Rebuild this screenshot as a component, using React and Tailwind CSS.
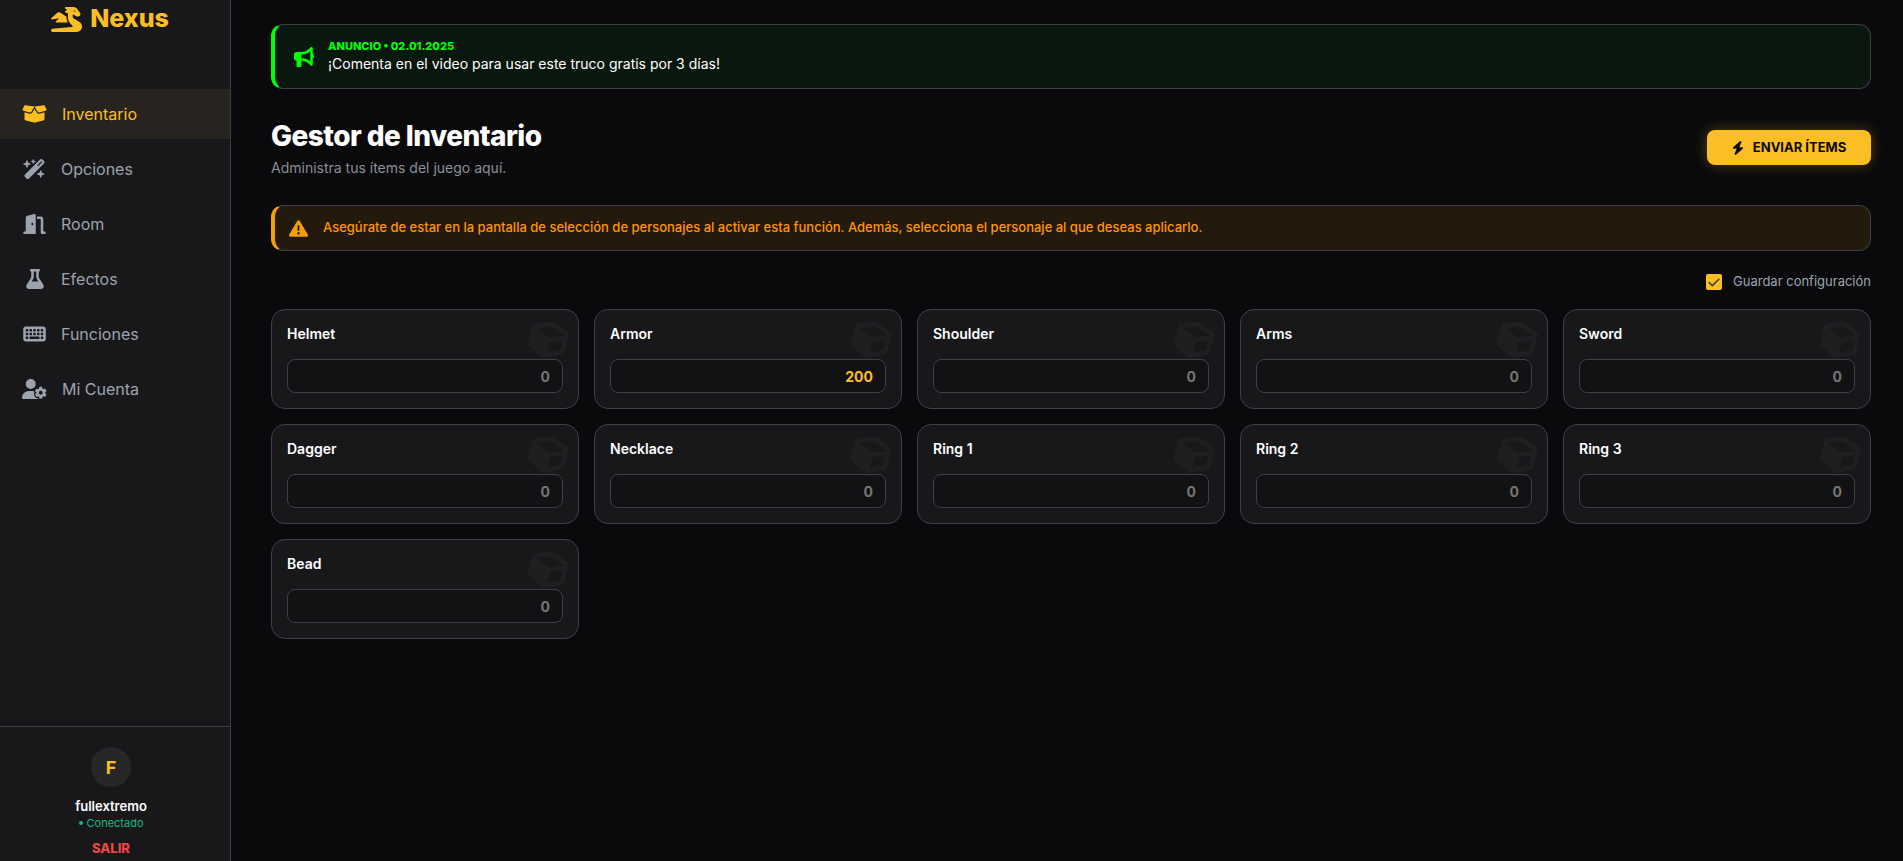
import React from "react";
import { FaCube } from "react-icons/fa";
import { FaBoxOpen, FaWandMagicSparkles, FaDoorOpen, FaFlask, FaKeyboard, FaUserGear, FaBullhorn, FaTriangleExclamation, FaBolt, FaDragon, FaCheck } from "react-icons/fa6";

const nav = [
  { label: "Inventario", Icon: FaBoxOpen, active: true, gap: "gap-[15px]", size: "w-[25px] h-[20px]" },
  { label: "Opciones", Icon: FaWandMagicSparkles, gap: "gap-[14px]", size: "w-[23px] h-[20px]" },
  { label: "Room", Icon: FaDoorOpen, gap: "gap-[14px]", size: "w-[23px] h-[20px]" },
  { label: "Efectos", Icon: FaFlask, gap: "gap-[14px]", size: "w-[18px] h-[20px]" },
  { label: "Funciones", Icon: FaKeyboard, gap: "gap-[14px]", size: "w-[23px] h-[20px]" },
  { label: "Mi Cuenta", Icon: FaUserGear, gap: "gap-[15px]", size: "w-[25px] h-[20px]" },
];

const items = [
  ["Helmet", 0], ["Armor", 200], ["Shoulder", 0], ["Arms", 0], ["Sword", 0],
  ["Dagger", 0], ["Necklace", 0], ["Ring 1", 0], ["Ring 2", 0], ["Ring 3", 0],
  ["Bead", 0],
];

function Sidebar() {
  return (
    <aside className="w-[231px] h-[861px] shrink-0 bg-[#18181b] border-r border-[#3f3f46] flex flex-col">
      <div className="h-[89px] flex justify-center items-start pt-[2px] gap-[8px] pr-[10px]">
        <FaDragon className="text-[#fbbf24] w-[31px] h-[25px] mt-[5px]" />
        <span className="text-[25px] leading-[32px] font-extrabold text-[#fbbf24]">Nexus</span>
      </div>
      <nav className="flex flex-col gap-[5px]">
        {nav.map(({ label, Icon, active, gap, size }) => (
          <div key={label} className={`h-[50px] flex items-center pl-[22px] ${gap} text-[16px] ${active ? "bg-[#27231e] text-[#fbbf24]" : "text-[#9ca3af]"}`}>
            <span className="w-[25px] flex justify-center"><Icon className={size} /></span>
            <span>{label}</span>
          </div>
        ))}
      </nav>
      <div className="mt-auto h-[135px] border-t border-[#3f3f46] flex flex-col items-center pt-[20px] pr-[8px]">
        <div className="w-[40px] h-[40px] rounded-full bg-[#27272a] flex items-center justify-center text-[#fbbf24] font-bold text-[18px]">F</div>
        <div className="mt-[10px] text-white text-[13px] leading-[18px] font-semibold">fullextremo</div>
        <div className="text-[#10b981] text-[11px] leading-[16px] flex items-center gap-[4px]">
          <span className="w-[4px] h-[4px] rounded-full bg-[#10b981]" />Conectado
        </div>
        <div className="mt-[8px] text-[#ef4444] text-[13px] leading-[18px] font-extrabold">SALIR</div>
      </div>
    </aside>
  );
}

function Card({ name, value }) {
  return (
    <div className="relative h-[100px] rounded-[14px] bg-[#18181b] border border-[#3f3f46] px-[15px] pt-[14px] overflow-hidden">
      <FaCube className="absolute right-[11px] top-[11px] w-[38px] h-[38px] text-[#1f1f22] rotate-[15deg]" />
      <div className="relative text-white text-[14px] leading-[20px] font-semibold">{name}</div>
      <div className={`relative mt-[15px] h-[34px] rounded-[8px] bg-[#121214] border border-[#3f3f46] flex items-center justify-end px-[12px] text-[14px] font-bold ${value ? "text-[#fbbf24]" : "text-[#757575]"}`}>
        {value}
      </div>
    </div>
  );
}

export default function App() {
  return (
    <div className="flex h-[861px] overflow-hidden bg-[#0a0a0c] font-['Inter',sans-serif]">
      <Sidebar />
      <main className="flex-1 pl-[40px] pr-[32px] pt-[24px]">
        <div className="h-[65px] rounded-[12px] border border-[#3f3f46] border-l-[4px] border-l-[#00ff00] bg-[#0a170e] flex items-center pl-[19px] gap-[14px]">
          <FaBullhorn className="text-[#00ff00] w-[20px] h-[20px]" />
          <div>
            <div className="text-[#00ff00] text-[11px] leading-[15px] font-extrabold">ANUNCIO • 02.01.2025</div>
            <div className="text-white text-[14px] leading-[20px]">¡Comenta en el video para usar este truco gratis por 3 días!</div>
          </div>
        </div>

        <div className="flex justify-between items-start mt-[30px]">
          <div>
            <h1 className="text-[28px] leading-[34px] font-extrabold text-white tracking-[-0.55px]">Gestor de Inventario</h1>
            <p className="mt-[5px] text-[14px] leading-[20px] text-[#8b8f98]">Administra tus ítems del juego aquí.</p>
          </div>
          <button className="mt-[11px] w-[164px] h-[35px] rounded-[8px] bg-[#fbbf24] text-[#0a0a0c] text-[13px] font-bold flex items-center justify-center gap-[9px] shadow-[0_0_14px_rgba(251,191,36,0.3)]">
            <FaBolt className="w-[12px] h-[14px]" />ENVIAR ÍTEMS
          </button>
        </div>

        <div className="mt-[27px] h-[46px] rounded-[12px] border border-[#3f3f46] border-l-[4px] border-l-[#f59e0b] bg-[#24190d] flex items-center pl-[14px] gap-[15px]">
          <FaTriangleExclamation className="text-[#f59e0b] w-[19px] h-[19px]" />
          <span className="text-[#ff9500] text-[13px] font-medium">Asegúrate de estar en la pantalla de selección de personajes al activar esta función. Además, selecciona el personaje al que deseas aplicarlo.</span>
        </div>

        <div className="mt-[23px] h-[16px] flex justify-end items-center gap-[11px]">
          <span className="w-[16px] h-[16px] rounded-[2px] bg-[#fbbf24] flex items-center justify-center">
            <FaCheck className="text-[#3f3f46] w-[12px] h-[13px]" />
          </span>
          <span className="text-[13px] text-[#9ca3af]">Guardar configuración</span>
        </div>

        <div className="mt-[19px] grid grid-cols-5 gap-[15px]">
          {items.map(([n, v]) => <Card key={n} name={n} value={v} />)}
        </div>
      </main>
    </div>
  );
}
